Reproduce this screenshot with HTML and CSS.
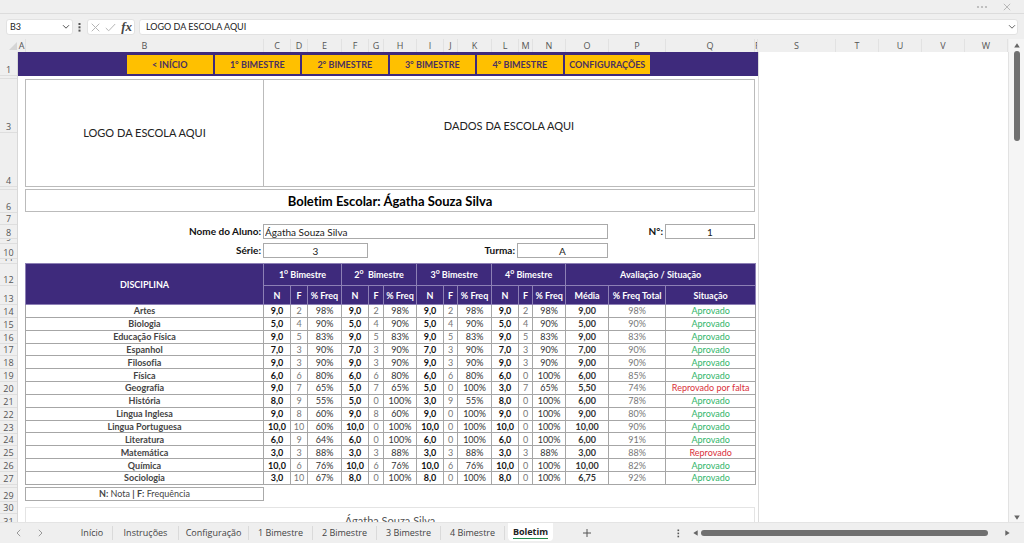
FILE: index.html
```html
<!DOCTYPE html>
<html lang="pt-BR">
<head>
<meta charset="utf-8">
<title>Boletim Escolar</title>
<link rel="stylesheet" href="styles.css">
</head>
<body>
<header class="titlebar">
  <button class="icon-btn" aria-label="Mais opções"><svg width="12" height="4" viewBox="0 0 12 4" fill="#b4b4b4"><circle cx="2" cy="2" r="1.1"/><circle cx="6" cy="2" r="1.1"/><circle cx="10" cy="2" r="1.1"/></svg></button>
  <button class="icon-btn" aria-label="Fechar"><svg width="8" height="8" viewBox="0 0 8 8" stroke="#b8b8b8" fill="none"><path d="M.8.8l6.4 6.4M7.2.8L.8 7.2"/></svg></button>
</header>

<div class="formula-bar">
  <div class="box name-box">
    <input aria-label="Caixa de nome" value="B3">
    <button class="icon-btn" aria-label="Abrir nomes"><svg width="8" height="6" viewBox="0 0 8 6" stroke="#555" fill="none"><path d="M1 1.2l3 3 3-3"/></svg></button>
  </div>
  <svg class="grip" width="3" height="9" viewBox="0 0 3 9" fill="#555"><rect x=".5" width="2" height="2"/><rect x=".5" y="3.3" width="2" height="2"/><rect x=".5" y="6.6" width="2" height="2"/></svg>
  <div class="box fx-box">
    <button class="icon-btn" aria-label="Cancelar"><svg width="9" height="9" viewBox="0 0 9 9" stroke="#b5b5b5" fill="none"><path d="M.7.7l7.6 7.6M8.3.7L.7 8.3"/></svg></button>
    <button class="icon-btn" aria-label="Inserir"><svg width="11" height="9" viewBox="0 0 11 9" stroke="#b5b5b5" fill="none"><path d="M.8 5l2.9 2.8L10.2 1"/></svg></button>
    <button class="icon-btn fx" aria-label="Inserir função">fx</button>
  </div>
  <div class="box formula">
    <input aria-label="Barra de fórmulas" value="LOGO DA ESCOLA AQUI">
    <button class="icon-btn" aria-label="Expandir"><svg width="8" height="6" viewBox="0 0 8 6" stroke="#666" fill="none"><path d="M1 1.2l3 3 3-3"/></svg></button>
  </div>
</div>

<main class="workspace">
  <div class="grid-area">
    <div class="col-heads">
      <span class="corner"><svg width="8" height="8" viewBox="0 0 8 8"><path d="M8 0v8H0z" fill="#d5d5d5"/></svg></span>
      <span>A</span><span>B</span><span>C</span><span>D</span><span>E</span><span>F</span><span>G</span><span>H</span><span>I</span><span>J</span><span>K</span><span>L</span><span>M</span><span>N</span><span>O</span><span>P</span><span>Q</span><span class="narrow">R</span><span>S</span><span>T</span><span>U</span><span>V</span><span>W</span>
    </div>
    <div class="rows">
      <div class="row-heads">
        <span class="h24">1</span><span class="h3"></span><span class="h54">3</span><span class="h54">4</span><span class="h3"></span><span class="h23">6</span><span class="h12">7</span><span class="h14">8</span><span class="h5">9</span><span class="h15">10</span><span class="h5">11</span><span class="h22">12</span><span class="h19">13</span>
        <div class="data-heads"><span>14</span><span>15</span><span>16</span><span>17</span><span>18</span><span>19</span><span>20</span><span>21</span><span>22</span><span>23</span><span>24</span><span>25</span><span>26</span><span>27</span></div>
        <span class="h3"></span><span class="h14">29</span><span class="h12">30</span><span class="h14">31</span>
      </div>

      <div class="sheet">
        <nav class="menu">
          <a href="#inicio">&lt; INÍCIO</a><a href="#b1">1° BIMESTRE</a><a href="#b2">2° BIMESTRE</a><a href="#b3">3° BIMESTRE</a><a href="#b4">4° BIMESTRE</a><a href="#config">CONFIGURAÇÕES</a>
        </nav>
        <div class="page">
          <section class="school">
            <div class="logo">LOGO DA ESCOLA AQUI</div>
            <div class="info">DADOS DA ESCOLA AQUI</div>
          </section>
          <h1>Boletim Escolar: Ágatha Souza Silva</h1>
          <form class="student">
            <label for="nome">Nome do Aluno:</label><input id="nome" class="name" value="Ágatha Souza Silva">
            <label for="numero">N°:</label><input id="numero" value="1">
            <label for="serie">Série:</label><input id="serie" value="3">
            <label for="turma">Turma:</label><input id="turma" value="A">
          </form>
          <table class="grades">
            <colgroup><col class="w238"><col class="w27"><col class="w17"><col class="w34"><col class="w27"><col class="w15"><col class="w33"><col class="w27"><col class="w14"><col class="w34"><col class="w27"><col class="w14"><col class="w33"><col class="w43"><col class="w57"><col class="w90"></colgroup>
            <thead>
              <tr class="top"><th rowspan="2">DISCIPLINA</th><th colspan="3">1<sup>o</sup> Bimestre</th><th colspan="3">2<sup>o</sup>&nbsp; Bimestre</th><th colspan="3">3<sup>o</sup> Bimestre</th><th colspan="3">4<sup>o</sup> Bimestre</th><th colspan="3">Avaliação / Situação</th></tr>
              <tr class="sub"><th>N</th><th>F</th><th>% Freq</th><th>N</th><th>F</th><th>% Freq</th><th>N</th><th>F</th><th>% Freq</th><th>N</th><th>F</th><th>% Freq</th><th>Média</th><th>% Freq Total</th><th>Situação</th></tr>
            </thead>
            <tbody>
              <tr><th>Artes</th><td>9,0</td><td>2</td><td>98%</td><td>9,0</td><td>2</td><td>98%</td><td>9,0</td><td>2</td><td>98%</td><td>9,0</td><td>2</td><td>98%</td><td>9,00</td><td>98%</td><td>Aprovado</td></tr>
              <tr><th>Biologia</th><td>5,0</td><td>4</td><td>90%</td><td>5,0</td><td>4</td><td>90%</td><td>5,0</td><td>4</td><td>90%</td><td>5,0</td><td>4</td><td>90%</td><td>5,00</td><td>90%</td><td>Aprovado</td></tr>
              <tr><th>Educação Física</th><td>9,0</td><td>5</td><td>83%</td><td>9,0</td><td>5</td><td>83%</td><td>9,0</td><td>5</td><td>83%</td><td>9,0</td><td>5</td><td>83%</td><td>9,00</td><td>83%</td><td>Aprovado</td></tr>
              <tr><th>Espanhol</th><td>7,0</td><td>3</td><td>90%</td><td>7,0</td><td>3</td><td>90%</td><td>7,0</td><td>3</td><td>90%</td><td>7,0</td><td>3</td><td>90%</td><td>7,00</td><td>90%</td><td>Aprovado</td></tr>
              <tr><th>Filosofia</th><td>9,0</td><td>3</td><td>90%</td><td>9,0</td><td>3</td><td>90%</td><td>9,0</td><td>3</td><td>90%</td><td>9,0</td><td>3</td><td>90%</td><td>9,00</td><td>90%</td><td>Aprovado</td></tr>
              <tr><th>Física</th><td>6,0</td><td>6</td><td>80%</td><td>6,0</td><td>6</td><td>80%</td><td>6,0</td><td>6</td><td>80%</td><td>6,0</td><td>0</td><td>100%</td><td>6,00</td><td>85%</td><td>Aprovado</td></tr>
              <tr><th>Geografia</th><td>9,0</td><td>7</td><td>65%</td><td>5,0</td><td>7</td><td>65%</td><td>5,0</td><td>0</td><td>100%</td><td>3,0</td><td>7</td><td>65%</td><td>5,50</td><td>74%</td><td class="fail">Reprovado por falta</td></tr>
              <tr><th>História</th><td>8,0</td><td>9</td><td>55%</td><td>5,0</td><td>0</td><td>100%</td><td>3,0</td><td>9</td><td>55%</td><td>8,0</td><td>0</td><td>100%</td><td>6,00</td><td>78%</td><td>Aprovado</td></tr>
              <tr><th>Lingua Inglesa</th><td>9,0</td><td>8</td><td>60%</td><td>9,0</td><td>8</td><td>60%</td><td>9,0</td><td>0</td><td>100%</td><td>9,0</td><td>0</td><td>100%</td><td>9,00</td><td>80%</td><td>Aprovado</td></tr>
              <tr><th>Lingua Portuguesa</th><td>10,0</td><td>10</td><td>60%</td><td>10,0</td><td>0</td><td>100%</td><td>10,0</td><td>0</td><td>100%</td><td>10,0</td><td>0</td><td>100%</td><td>10,00</td><td>90%</td><td>Aprovado</td></tr>
              <tr><th>Literatura</th><td>6,0</td><td>9</td><td>64%</td><td>6,0</td><td>0</td><td>100%</td><td>6,0</td><td>0</td><td>100%</td><td>6,0</td><td>0</td><td>100%</td><td>6,00</td><td>91%</td><td>Aprovado</td></tr>
              <tr><th>Matemática</th><td>3,0</td><td>3</td><td>88%</td><td>3,0</td><td>3</td><td>88%</td><td>3,0</td><td>3</td><td>88%</td><td>3,0</td><td>3</td><td>88%</td><td>3,00</td><td>88%</td><td class="fail">Reprovado</td></tr>
              <tr><th>Química</th><td>10,0</td><td>6</td><td>76%</td><td>10,0</td><td>6</td><td>76%</td><td>10,0</td><td>6</td><td>76%</td><td>10,0</td><td>0</td><td>100%</td><td>10,00</td><td>82%</td><td>Aprovado</td></tr>
              <tr><th>Sociologia</th><td>3,0</td><td>10</td><td>67%</td><td>8,0</td><td>0</td><td>100%</td><td>8,0</td><td>0</td><td>100%</td><td>8,0</td><td>0</td><td>100%</td><td>6,75</td><td>92%</td><td>Aprovado</td></tr>
            </tbody>
          </table>
          <p class="legend"><b>N:</b> Nota <b>|</b> <b>F:</b> Frequência</p>
          <div class="chart">Ágatha Souza Silva</div>
        </div>
      </div>

      <div class="empty"></div>
    </div>
  </div>

  <div class="vscroll">
    <svg width="6" height="5" viewBox="0 0 6 5"><path d="M3 .3L5.8 4.6H.2z" fill="#666"/></svg>
    <span class="vthumb"></span>
    <svg class="down" width="6" height="5" viewBox="0 0 6 5"><path d="M.2.4h5.6L3 4.7z" fill="#666"/></svg>
  </div>
</main>

<footer class="tabs">
  <div class="arrows">
    <button class="icon-btn" aria-label="Anterior"><svg width="5" height="8" viewBox="0 0 5 8" stroke="#999" fill="none"><path d="M4.2.8L1 4l3.2 3.2"/></svg></button>
    <button class="icon-btn" aria-label="Próxima"><svg width="5" height="8" viewBox="0 0 5 8" stroke="#999" fill="none"><path d="M.8.8L4 4 .8 7.2"/></svg></button>
  </div>
  <button class="tab t-sm">Início</button><button class="tab t-md">Instruções</button><button class="tab t-lg">Configuração</button><button class="tab">1 Bimestre</button><button class="tab">2 Bimestre</button><button class="tab">3 Bimestre</button><button class="tab">4 Bimestre</button><button class="tab active"><span>Boletim</span></button>
  <button class="icon-btn add" aria-label="Nova planilha"><svg width="8" height="8" viewBox="0 0 8 8" stroke="#555" fill="none"><path d="M4 0v8M0 4h8"/></svg></button>
  <div class="hscroll">
    <svg width="3" height="9" viewBox="0 0 3 9" fill="#555"><rect x=".5" y=".5" width="1.6" height="1.6"/><rect x=".5" y="3.6" width="1.6" height="1.6"/><rect x=".5" y="6.7" width="1.6" height="1.6"/></svg>
    <svg class="left" width="5" height="6" viewBox="0 0 5 6"><path d="M4.7.2v5.6L.3 3z" fill="#666"/></svg>
    <span class="hthumb"></span>
    <svg width="5" height="6" viewBox="0 0 5 6"><path d="M.3.2v5.6L4.7 3z" fill="#666"/></svg>
  </div>
</footer>
</body>
</html>
```
FILE: styles.css
```css
* { box-sizing: border-box; }
body {
  margin: 0;
  height: 100vh;
  display: flex;
  flex-direction: column;
  overflow: hidden;
  background: #efefef;
  color: #222;
  font: 10px/12px Lato, "Liberation Sans", sans-serif;
  font-variant-ligatures: none;
}
button, input { font: inherit; color: inherit; border: 0; padding: 0; background: none; }
input { min-width: 0; }
.icon-btn { display: flex; align-items: center; justify-content: center; }

.titlebar {
  flex: none;
  height: 14px;
  display: flex;
  justify-content: flex-end;
  align-items: center;
  gap: 15px;
  padding-right: 13px;
  border-bottom: 1px solid #dcdcdc;
}

.formula-bar {
  flex: none;
  display: flex;
  align-items: center;
  padding: 5px 6px 4px;
  font-size: 9px;
}
.box {
  height: 16px;
  display: flex;
  align-items: center;
  background: #fff;
  border: 1px solid #e2e2e2;
  border-radius: 3px;
}
.name-box { width: 67px; padding: 0 2px 0 3px; }
.name-box input, .formula input { flex: 1; }
.grip { margin: 0 6px 0 5px; }
.fx-box { width: 48px; justify-content: space-between; padding: 0 2px 0 3px; margin-right: 4px; }
.fx { font: italic bold 13px/12px "Liberation Serif", serif; color: #444; }
.formula { flex: 1; padding: 0 1px 0 6px; }

.workspace { flex: 1; min-height: 0; display: flex; overflow: hidden; }
.grid-area { flex: 1; min-width: 0; display: flex; flex-direction: column; }
.rows { flex: 1; min-height: 0; display: flex; }

.col-heads {
  flex: none;
  height: 13px;
  display: grid;
  grid-template-columns: 18px 8px 238px 27px 17px 34px 27px 15px 33px 27px 14px 34px 27px 14px 33px 43px 57px 89px 3px 78px 43px 43px 43px 43px;
  font: 9px/13px "Open Sans", sans-serif;
  color: #555;
}
.col-heads span {
  display: flex;
  justify-content: center;
  border-right: 1px solid #e2e2e2;
  border-bottom: 1px solid #ddd;
}
.col-heads .corner { justify-content: flex-end; align-items: center; padding-right: 1px; border: 0; }
.col-heads .narrow { justify-content: flex-start; overflow: hidden; }

.row-heads {
  flex: none;
  width: 18px;
  font: 9px/11px "Open Sans", sans-serif;
  color: #555;
  border-right: 1px solid #d8d8d8;
}
.row-heads span {
  display: flex;
  align-items: flex-end;
  justify-content: center;
  overflow: hidden;
  border-bottom: 1px solid #dedede;
}
.h3 { height: 3px; }
.h5 { height: 5px; }
.h12 { height: 12px; }
.h14 { height: 14px; }
.h15 { height: 15px; }
.h19 { height: 19px; }
.h22 { height: 22px; }
.h23 { height: 23px; }
.h24 { height: 24px; }
.h54 { height: 54px; }
.data-heads { height: 180px; display: grid; grid-template-rows: repeat(14, 1fr); }

.sheet { flex: none; width: 741px; background: #fff; border-right: 1px solid #dcdcdc; }
.menu {
  height: 24px;
  display: grid;
  grid-template-columns: repeat(6, 1fr);
  column-gap: 2px;
  padding: 3px 108px 2px 109px;
  background: #3e2a7c;
}
.menu a {
  display: flex;
  align-items: center;
  justify-content: center;
  background: #ffc000;
  color: #4a3060;
  font-size: 9px;
  font-weight: 700;
  text-decoration: none;
}
.page { padding: 3px 3px 0 7px; }
.school {
  display: grid;
  grid-template-columns: 238px 1fr;
  height: 108px;
  border: 1px solid #bbb;
  font-size: 11px;
}
.logo, .info { display: flex; align-items: center; justify-content: center; }
.logo { border-right: 1px solid #bbb; }
.info { padding-bottom: 14px; }
h1 {
  margin: 2px 0 12px;
  height: 23px;
  display: flex;
  align-items: center;
  justify-content: center;
  border: 1px solid #bbb;
  font-size: 13px;
  color: #000;
}
.student {
  display: grid;
  grid-template-columns: 238px 105px 149px 91px 57px 90px;
  grid-template-rows: 15px 15px;
  row-gap: 4px;
  margin-bottom: 5px;
}
.student label { text-align: right; padding-right: 2px; font-weight: 700; line-height: 15px; color: #111; }
.student input { border: 1px solid #aaa; text-align: center; }
.student .name { grid-column: span 3; text-align: left; padding-left: 1px; }

.grades {
  width: 730px;
  height: 222px;
  table-layout: fixed;
  border-collapse: collapse;
  font-size: 9px;
  line-height: 11px;
}
.w14 { width: 14px; }
.w15 { width: 15px; }
.w17 { width: 17px; }
.w27 { width: 27px; }
.w33 { width: 33px; }
.w34 { width: 34px; }
.w43 { width: 43px; }
.w57 { width: 57px; }
.w90 { width: 90px; }
.w238 { width: 238px; }
.grades th, .grades td { padding: 0; text-align: center; white-space: nowrap; border: 1px solid #a6a6a6; }
.grades thead th { background: #3e2a7c; color: #fff; border-color: #8d80b5; }
.grades sup { font-size: 7px; line-height: 0; }
.top { height: 22px; }
.sub { height: 19px; }
.grades tbody th { color: #444; }
.grades td { color: #333; }
.grades td:nth-child(3n+2) { font-weight: 700; color: #111; }
.grades td:nth-child(3n) { color: #777; }
.grades td:nth-child(14) { color: #333; }
.grades td:nth-child(15) { color: #777; }
.grades td:nth-child(16) { font-weight: 400; color: #2fb56a; }
.grades td.fail { color: #d9303a; }

.legend {
  width: 239px;
  margin: 2px 0 6px;
  border: 1px solid #aaa;
  text-align: center;
  font-size: 9px;
  color: #444;
}
.chart {
  height: 120px;
  padding-top: 5px;
  border: 1px solid #e4e4e4;
  text-align: center;
  font-size: 11px;
  line-height: 16px;
  color: #555;
}
.empty { flex: 1; background: #fff; border-right: 1px solid #e2e2e2; }
.vscroll {
  flex: none;
  width: 15px;
  padding-top: 4px;
  display: flex;
  flex-direction: column;
  align-items: center;
  background: #f5f5f5;
}
.vthumb { width: 6px; height: 90px; margin-top: 3px; border-radius: 3px; background: #707070; }
.down { margin-top: auto; margin-bottom: 2px; }

.tabs {
  position: relative;
  flex: none;
  height: 21px;
  display: flex;
  align-items: center;
  border-top: 1px solid #e4e4e4;
  background: #efefef;
  font: 9px/14px "Open Sans", sans-serif;
  color: #444;
}
.arrows { width: 72px; display: flex; gap: 17px; padding-left: 16px; }
.tab { flex: none; width: 64px; height: 14px; border-right: 1px solid #dadada; }
.t-sm { width: 41px; }
.t-md { width: 66px; }
.t-lg { width: 70px; }
.active {
  width: 45px;
  height: 18px;
  margin: 0 3px;
  align-self: flex-start;
  background: #fff;
  border: 0;
  border-radius: 0 0 4px 4px;
  font-weight: 700;
  color: #222;
}
.active span { border-bottom: 1px solid #1f8a4c; }
.add { margin-left: 27px; }
.hscroll { flex: 1; display: flex; align-items: center; padding: 0 14px 0 86px; }
.left { margin-left: 13px; }
.hthumb { flex: 1; height: 6px; margin: 0 17px 0 3px; border-radius: 3px; background: #707070; }
```
